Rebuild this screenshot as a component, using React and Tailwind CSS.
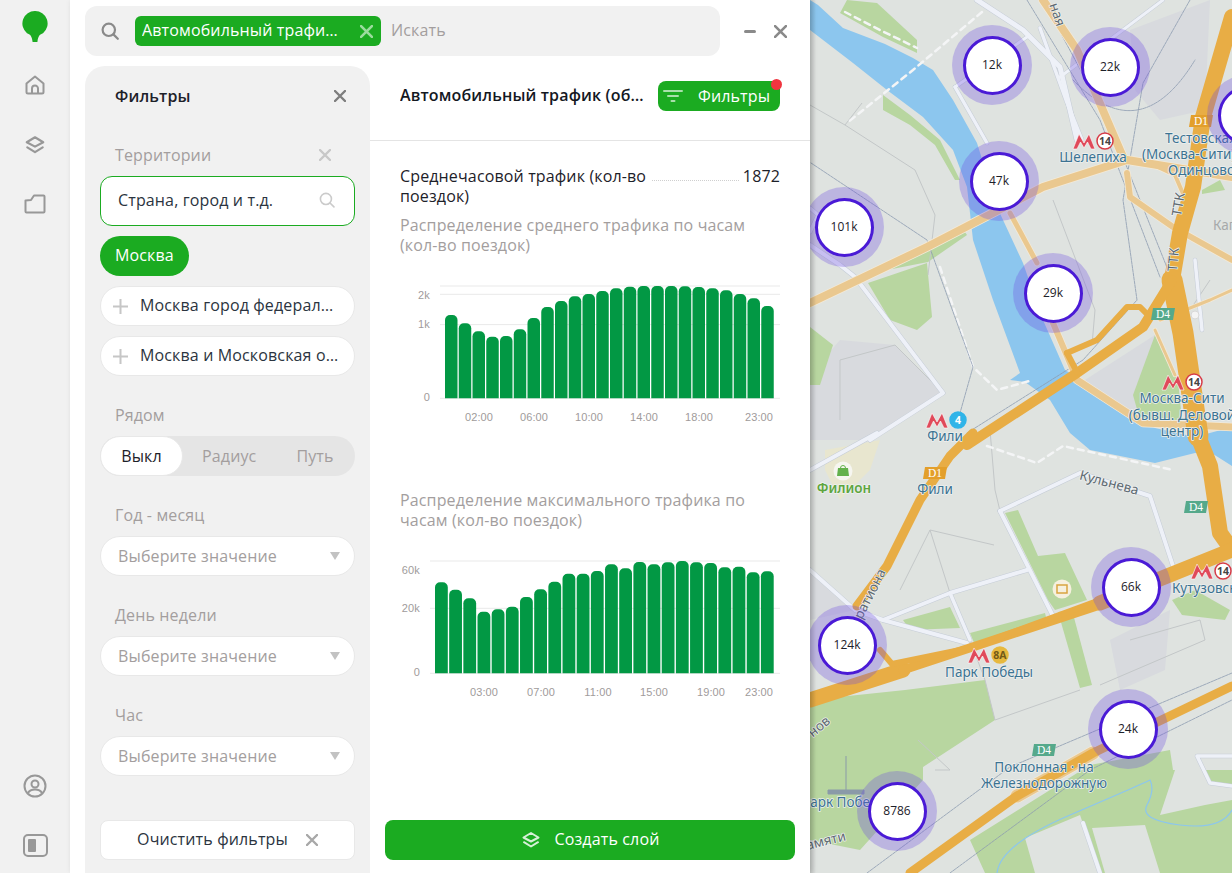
import React from 'react';

const GREEN = '#1bab21';

const avgTops = [135, 160, 184, 200, 198, 178, 144, 111, 93, 79, 72, 63, 55, 50, 48, 48, 48, 49, 51, 55, 61, 72, 85, 108];
const maxTops = [112, 134, 160, 200, 193, 185, 156, 133, 110, 86, 86, 78, 58, 70, 51, 58, 52, 48, 52, 54, 67, 65, 82, 79];

const Cross = ({ size = 12, color = '#8a8a8a', width = 2.4 }) => (
  <svg className="shrink-0" width={size} height={size} viewBox="0 0 12 12" fill="none" stroke={color} strokeWidth={width} strokeLinecap="round">
    <path d="M1 1l10 10M11 1L1 11" />
  </svg>
);

const SearchIcon = ({ size = 18, color = '#8a8a8a', width = 2.2 }) => (
  <svg className="shrink-0" width={size} height={size} viewBox="0 0 18 18" fill="none" stroke={color} strokeWidth={width} strokeLinecap="round">
    <circle cx="7.8" cy="7.8" r="6.2" />
    <path d="M12.4 12.4l4.4 4.4" />
  </svg>
);

const LayersIcon = ({ color, size = 20 }) => (
  <svg width={size} height={size} viewBox="0 0 20 20" fill="none" stroke={color} strokeWidth="2" strokeLinejoin="round" strokeLinecap="round">
    <path d="M10 3l7.5 4.5L10 11.5 2.500 7.500z" />
    <path d="M3 12.200l7 4.300 7-4.300" />
  </svg>
);

const Sidebar = () => (
  <div className="w-[70px] shrink-0 bg-[#f1f1f1] flex flex-col items-center pt-[11px] pb-[16px]">
    <svg width="26" height="32" viewBox="0 0 26 32" fill={GREEN}>
      <path d="M13 0a12.500 12.500 0 0 1 8 22.200c-3 1-4.800 2.300-5.600 8.800h-4.800c-.8-6.500-2.600-7.800-5.600-8.800A12.500 12.500 0 0 1 13 0z" />
    </svg>
    <svg className="mt-[31px]" width="22" height="22" viewBox="0 0 22 22" fill="none" stroke="#989898" strokeWidth="2" strokeLinejoin="round">
      <path d="M2.500 9.500L11 2.500l8.500 7v8.500a1.500 1.500 0 0 1-1.500 1.500H4a1.500 1.500 0 0 1-1.500-1.500z" />
      <path d="M8 19.500v-5a3 3 0 0 1 6 0v5" />
    </svg>
    <div className="mt-[38px]">
      <LayersIcon color="#989898" size={22} />
    </div>
    <svg className="mt-[38px]" width="22" height="20" viewBox="0 0 22 20" fill="none" stroke="#989898" strokeWidth="2" strokeLinejoin="round">
      <path d="M1.500 6.500L7 6l3-4.500h9.500a1 1 0 0 1 1 1v15a1 1 0 0 1-1 1h-17a1 1 0 0 1-1-1z" />
    </svg>
    <div className="flex-1" />
    <svg width="24" height="24" viewBox="0 0 24 24" fill="none" stroke="#989898" strokeWidth="2">
      <circle cx="12" cy="12" r="10.500" />
      <circle cx="12" cy="10" r="3.500" />
      <path d="M5 19c1.500-3 4-3.500 7-3.500s5.500.5 7 3.500" />
    </svg>
    <div className="mt-[36px] w-[25px] h-[23px] rounded-[5px] border-2 border-[#989898] flex p-[3px]">
      <div className="w-[8px] bg-[#989898] rounded-[1px]" />
    </div>
  </div>
);

const Label = ({ children, className = '' }) => (
  <div className={`pl-[15px] h-[20px] leading-[20px] text-[#a39e9e] ${className}`}>{children}</div>
);

const AddRow = ({ children }) => (
  <div className="h-[40px] mt-[10px] pb-[2px] flex items-center rounded-full bg-white border border-[#e8e8e8] pl-[12px] pr-[14px]">
    <svg className="shrink-0 mt-[2px]" width="15" height="15" viewBox="0 0 15 15" stroke="#c6c6c6" strokeWidth="2">
      <path d="M7.500 0v15M0 7.500h15" />
    </svg>
    <span className="ml-[12px] truncate text-[#2b3440]">{children}</span>
  </div>
);

const SelectBox = () => (
  <div className="h-[40px] mt-[11px] flex items-center justify-between rounded-full bg-white border border-[#e8e8e8] pl-[17px] pr-[14px] text-[#a39e9e]">
    <span>Выберите значение</span>
    <svg width="10" height="8" viewBox="0 0 10 8" fill="#c2c2c2">
      <path d="M0 0h10L5 8z" />
    </svg>
  </div>
);

const FiltersPanel = () => (
  <div className="w-[285px] shrink-0 bg-[#f1f1f1] rounded-t-[20px] px-[15px] flex flex-col">
    <div className="h-[60px] flex items-center justify-between pl-[15px] pr-[9px]">
      <span className="font-semibold text-[#1d2129]">Фильтры</span>
      <Cross size={12} color="#7e7e7e" />
    </div>
    <div className="mt-[19px] flex items-center justify-between pr-[24px]">
      <Label>Территории</Label>
      <Cross size={12} color="#c8c8c8" />
    </div>
    <div className="mt-[11px] h-[50px] pb-[2px] flex items-center justify-between rounded-[12px] bg-white border border-[#1bab21] pl-[17px] pr-[19px] text-[#2b3440]">
      <span>Страна, город и т.д.</span>
      <SearchIcon size={16} color="#cbcbcb" width={1.8} />
    </div>
    <div className="mt-[10px] self-start h-[40px] pb-[2px] px-[15px] flex items-center rounded-full bg-[#1bab21] text-white">Москва</div>
    <AddRow>Москва город федерального значения</AddRow>
    <AddRow>Москва и Московская область</AddRow>
    <Label className="mt-[29px]">Рядом</Label>
    <div className="mt-[11px] h-[40px] flex items-center rounded-full bg-[#e5e5e5] text-[#a39e9e]">
      <div className="w-[83px] h-full rounded-full bg-white border border-[#e8e8e8] flex items-center justify-center text-[#1d2129]">Выкл</div>
      <span className="ml-[19px]">Радиус</span>
      <span className="ml-[40px]">Путь</span>
    </div>
    <Label className="mt-[29px]">Год - месяц</Label>
    <SelectBox />
    <Label className="mt-[29px]">День недели</Label>
    <SelectBox />
    <Label className="mt-[29px]">Час</Label>
    <SelectBox />
    <div className="mt-[44px] h-[40px] flex items-center justify-center rounded-[8px] bg-white border border-[#e8e8e8] text-[#2b3440]">
      <span className="mb-[2px]">Очистить фильтры</span>
      <span className="ml-[18px]">
        <Cross size={12} color="#a8a8a8" />
      </span>
    </div>
  </div>
);

const barPath = (x, top, w, base) => {
  const r = 5;
  return `M${x} ${base}V${top + r}a${r} ${r} 0 0 1 ${r} -${r}h${w - 2 * r}a${r} ${r} 0 0 1 ${r} ${r}V${base}z`;
};

const Chart = ({ tops, startX, step, barW, gridX, grid, yLabels, yRight, xLabels }) => (
  <svg className="mt-[15px] block" width="400" height="170" viewBox="0 0 400 170">
    {grid.map((y) => (
      <line key={y} x1={gridX} x2="390" y1={y} y2={y} stroke="#e9e9e9" strokeWidth="1" />
    ))}
    {tops.map((t, i) => (
      <path key={i} d={barPath(startX + i * step, t / 3, barW, 128.3)} fill="#029844" />
    ))}
    <g fill="#a09b9b" fontSize="11" fontFamily='"Liberation Sans", sans-serif'>
      {yLabels.map(([txt, y]) => (
        <text key={txt} x={yRight} y={y} textAnchor="end">{txt}</text>
      ))}
      {xLabels.map(([txt, x]) => (
        <text key={txt} x={x} y="151" textAnchor="middle">{txt}</text>
      ))}
    </g>
  </svg>
);

const ReportPanel = () => (
  <div className="flex-1 flex flex-col min-w-0">
    <div className="h-[75px] border-b border-[#e4e4e4] flex items-start pt-[15px] pl-[30px] pr-[30px]">
      <span className="w-[248px] h-[30px] leading-[28px] truncate font-semibold text-[#14181f]">Автомобильный трафик (общий)</span>
      <div className="relative ml-[10px] w-[122px] h-[30px] rounded-[8px] bg-[#1bab21] flex items-center text-white">
        <svg className="ml-[5px]" width="20" height="14" viewBox="0 0 20 14" stroke="#a9e0ab" strokeWidth="2" strokeLinecap="round">
          <path d="M1 2h18M5 7h10M8.500 12h3" />
        </svg>
        <span className="ml-[15px]">Фильтры</span>
        <span className="absolute -top-[2px] -right-[2px] w-[11px] h-[11px] rounded-full bg-[#f0353f]" />
      </div>
    </div>
    <div className="pt-[25px] pl-[20px]">
      <div className="flex items-start pl-[10px] pr-[30px] leading-[20px] text-[#1d2129]">
        <span className="w-[250px] shrink-0">Среднечасовой трафик (кол-во поездок)</span>
        <span className="mt-[14px] ml-[2px] flex-1 border-b border-dotted border-[#cfcfcf]" />
        <span className="ml-[4px]">1872</span>
      </div>
      <div className="mt-[9px] pl-[10px] w-[370px] leading-[20px] text-[#a39e9e]">Распределение среднего трафика по часам (кол-во поездок)</div>
      <Chart
        tops={avgTops}
        startX={55}
        step={13.75}
        barW={12.500}
        gridX={50}
        grid={[16, 24.300, 54.600, 128.300]}
        yLabels={[['2k', 29], ['1k', 57.500], ['0', 131]]}
        yRight={40}
        xLabels={[['02:00', 89], ['06:00', 144], ['10:00', 199], ['14:00', 254], ['18:00', 309], ['23:00', 369]]}
      />
      <div className="mt-[50px] pl-[10px] w-[370px] leading-[20px] text-[#a39e9e]">Распределение максимального трафика по часам (кол-во поездок)</div>
      <Chart
        tops={maxTops}
        startX={45}
        step={14.170}
        barW={12.800}
        gridX={40}
        grid={[16, 63.300, 128.300]}
        yLabels={[['60k', 29], ['20k', 67], ['0', 131]]}
        yRight={30}
        xLabels={[['03:00', 94], ['07:00', 151], ['11:00', 208], ['15:00', 264], ['19:00', 321], ['23:00', 369]]}
      />
    </div>
    <div className="flex-1" />
    <div className="px-[15px] pb-[13px]">
      <div className="h-[40px] rounded-[8px] bg-[#1bab21] flex items-center justify-center text-white">
        <LayersIcon color="#d6f0d7" />
        <span className="ml-[14px] mb-[2px]">Создать слой</span>
      </div>
    </div>
  </div>
);

const ORANGE = '#e8ad45';
const TAN = '#eac88f';

const whiteRoads = [
  ['0,245 30,265 45,277 133,393 60,440', 4],
  ['167,0 213,30 250,67 267,140', 5],
  ['145,87 177,143', 3.5],
  ['145,87 217,37', 3],
  ['250,77 353,0', 3],
  ['230,28 256,100 272,140', 3.5],
  ['190,511 270,473 340,496 363,566', 4],
  ['190,511 243,616', 4],
  ['73,620 140,593 217,570', 4],
  ['0,570 45,610 73,620 157,643', 4],
  ['140,593 160,640', 3.5],
  ['0,470 67,433', 4],
  ['273,823 290,873', 4],
  ['422,756 387,756 400,783 422,786', 3.5],
  ['0,208 8,215 0,232', 3.5],
  ['385,260 392,330', 3.5],
];

const tanRoads = [
  ['0,303 117,247 233,187 317,160 422,177', 8],
  ['233,0 267,50 313,157', 8],
  ['200,213 227,263', 5],
  ['243,323 263,370', 6],
  ['317,173 320,197 363,227 422,260', 6],
  ['267,380 333,423 422,427', 7],
  ['333,160 365,175 380,210', 4],
  ['345,330 365,375', 3],
  ['350,320 400,300 422,290', 3],
  ['207,796 283,753', 13],
];

const orangeRoads = [
  ['422,17 393,117 383,187 370,233 362,280 373,333 388,436 400,466 410,533 422,550', 16],
  ['362,280 373,333 388,436', 21],
  ['157,445 267,373 333,327 362,280', 10],
  ['163,433 140,456 110,500 77,566 47,606', 9],
  ['0,700 93,670', 15],
  ['93,670 290,605', 9],
  ['70,650 82,664 160,648 290,600', 6],
  ['290,603 422,550', 15],
  ['100,873 207,796 283,753 422,686', 9],
  ['257,353 287,340 317,307 330,307 340,317', 6],
  ['257,353 267,372', 6],
];

const Metro = ({ x, y, label, ring = '#d63b47', fill = '#ffffff', color = '#444' }) => (
  <g>
    <path d={`M${x - 11} ${y + 7}l6 -15 5 9 5 -9 6 15h-4l-3.500 -7 -3.500 6 -3.500 -6 -3.500 7z`} fill="#e04a5a" stroke="#ffffff" strokeWidth=".6" />
    <circle cx={x + 21} cy={y - 1} r="8" fill={fill} stroke={ring} strokeWidth="1.500" />
    <text x={x + 21} y={y + 3} textAnchor="middle" fontSize="10.500" fontWeight="700" fill={color}>{label}</text>
  </g>
);

const RoadBadge = ({ x, y, label, fill }) => (
  <g>
    <path d={`M${x - 12} ${y + 6}l2 -12h22l-2 12z`} fill={fill} />
    <text x={x} y={y + 4} textAnchor="middle" fontSize="11.500" fontFamily='"Liberation Serif", serif' fill="#ffffff">{label}</text>
  </g>
);

const mapLabels = [
  ['Шелепиха', 283, 162, 'middle'],
  ['Тестовская', 355, 143, 'start'],
  ['(Москва-Сити)', 332, 159, 'start'],
  ['Одинцово', 358, 175, 'start'],
  ['Москва-Сити', 372, 403, 'middle'],
  ['(бывш. Деловой', 372, 420, 'middle'],
  ['центр)', 372, 436, 'middle'],
  ['Фили', 135, 441, 'middle'],
  ['Фили', 125, 494, 'middle'],
  ['Кутузовск', 362, 593, 'start'],
  ['Парк Победы', 179, 677, 'middle'],
  ['Поклонная · на', 234, 772, 'middle'],
  ['Железнодорожную', 234, 788, 'middle'],
  ['Парк Побе', 60, 807, 'end'],
];

const rotatedLabels = [
  ['Кульнева', 298, 487, 15],
  ['памяти', 13, 846, -14],
  ['ратиона', 64, 596, -63],
  ['нов', 12, 730, -40],
  ['ная', 243, 16, 72],
  ['ТТК', 373, 205, -80],
  ['ТТК', 368, 260, -85],
];

const clusters = [
  ['12k', 182, 65],
  ['22k', 300, 67],
  ['', 437, 115],
  ['47k', 189, 181],
  ['101k', 34, 227],
  ['29k', 243, 293],
  ['66k', 321, 587],
  ['124k', 37, 645],
  ['24k', 318, 729],
  ['8786', 87, 811],
];

const MapView = () => (
  <div className="relative w-[422px] h-full overflow-hidden bg-[#dfe3e0] tracking-normal">
    <svg className="absolute inset-0" width="422" height="873" viewBox="0 0 422 873" fontFamily='"Noto Sans", sans-serif'>
      <g fill="#d8dade">
        <path d="M30 340L85 345 133 393 60 440 0 440 0 375z" />
        <path d="M320 30L400 0 395 110 350 120 325 90z" />
        <path d="M275 380L345 335 365 400 330 420z" />
        <path d="M300 640L360 610 355 670 310 690z" />
        <path d="M0 570L45 610 0 620z" />
      </g>
      <path d="M15 450L70 440 60 470 30 500 15 470z" fill="#e8e6cf" />
      <path d="M0 0L8 5 33 28 75 44 103 58 123 70 143 100 167 143 187 207 213 263 233 320 255 370 275 382 305 405 345 428 385 437 422 427V466L400 452 385 453 345 463 280 450 260 433 240 400 215 382 200 380 210 373 183 300 163 240 160 213 157 187 143 150 113 117 77 90 43 63 0 30z" fill="#8cc6ee" />
      <g fill="#b8d6a0">
        <path d="M37 0L67 3 107 40 107 53 73 37 30 13z" />
        <path d="M73 95L100 115 130 140 150 180 145 180 125 145 100 125 73 110z" />
        <path d="M58 283L117 263 122 317 107 330 80 320z" />
        <path d="M77 270L150 225 157 235 118 262z" />
        <path d="M0 327L23 345 10 385 0 385z" />
        <path d="M323 395L345 335 368 380 372 420 330 420z" />
        <path d="M392 190L410 180 415 190 392 194z" />
        <path d="M0 700L95 690 175 680 185 720 113 767 113 780 50 850 0 840z" />
        <path d="M160 840L280 765 360 750 363 770 422 770V873H175z" />
        <path d="M195 513L208 510 228 556 255 553 277 600 245 610 238 600z" />
        <path d="M248 612L262 610 282 685 270 688z" />
        <path d="M93 620L140 607 150 628 100 630z" />
        <path d="M160 633L235 613 238 625 165 645z" />
        <path d="M362 600L385 590 420 610 415 620 372 615z" />
      </g>
      <g fill="#dfe3e0">
        <path d="M215 838L270 815 290 873H225z" />
        <path d="M282 828L335 825 350 873H295z" />
        <path d="M365 770L385 756 400 783 422 786V800L395 805 350 815z" />
      </g>
      <g fill="none" stroke="#c3c7c8" strokeWidth="1">
        <path d="M0 105L35 125 105 170 125 215 118 275" />
        <path d="M35 125L52 103" />
        <path d="M30 420L30 360 85 345 133 393" />
        <path d="M243 200L285 310 282 345" />
        <path d="M120 530L140 593M90 590L120 530 184 545" />
        <path d="M185 720L175 680 160 640M185 720L270 690" />
        <path d="M125 770L140 770 108 740M320 640L390 620 395 640 290 685" />
        <path d="M380 310L400 280M180 430L185 490 190 511" />
      </g>
      <g fill="none" strokeLinecap="round" strokeLinejoin="round">
        {whiteRoads.map(([pts, w]) => (
          <polyline key={pts} points={pts} stroke="#c5ccd6" strokeWidth={w + 1} />
        ))}
        {whiteRoads.map(([pts, w]) => (
          <polyline key={pts} points={pts} stroke="#eef1f8" strokeWidth={w} />
        ))}
        <path d="M172 12L103 70 37 123M130 267L163 367 187 390 223 380M177 446L227 463 253 446 363 470M35 12L70 30 107 48" stroke="#f4f5f6" strokeWidth="2.500" strokeDasharray="6 5" />
        <path d="M217 0L290 120 350 277M233 0L300 125 370 300M1 163L117 240 163 367 150 413M380 0L333 83 313 200 327 300 273 360 157 433M263 80Q330 150 385 60M57 873L200 767 422 673M140 873L280 770 422 700" stroke="#8c9bb0" strokeWidth=".8" strokeDasharray="3 1" />
        {tanRoads.map(([pts, w]) => (
          <polyline key={pts} points={pts} stroke="#f3ead8" strokeWidth={w + 1.500} />
        ))}
        {tanRoads.map(([pts, w]) => (
          <polyline key={pts + 't'} points={pts} stroke={TAN} strokeWidth={w} />
        ))}
        {orangeRoads.map(([pts, w]) => (
          <polyline key={pts} points={pts} stroke={ORANGE} strokeWidth={w} />
        ))}
        <path d="M187 873Q190 845 260 815T340 780Q345 790 337 805T370 825 422 810" stroke="#8cc6ee" strokeWidth="1.200" />
      </g>
      <circle cx="385" cy="315" r="4" fill="#f4f4f4" stroke="#d8d8d8" />
      <Metro x={274} y={142} label="14" />
      <Metro x={363} y={383} label="14" />
      <Metro x={392} y={572} label="14" />
      <Metro x={127} y={421} label="4" fill="#30b4e8" ring="#30b4e8" color="#ffffff" />
      <Metro x={169} y={656} label="8А" fill="#e7b93e" ring="#e7b93e" color="#735a18" />
      <RoadBadge x={391} y={121} label="D1" fill="#e39f2b" />
      <RoadBadge x={353} y={314} label="D4" fill="#55a98b" />
      <RoadBadge x={125} y={473} label="D1" fill="#e39f2b" />
      <RoadBadge x={386} y={507} label="D4" fill="#55a98b" />
      <RoadBadge x={234} y={750} label="D4" fill="#55a98b" />
      <circle cx="33" cy="471" r="9.500" fill="#f6f6f0" />
      <path d="M28 468h10l1 8H27z" fill="#63b14c" />
      <path d="M30.500 468a2.500 2.500 0 0 1 5 0" fill="none" stroke="#63b14c" />
      <circle cx="252" cy="589" r="9.500" fill="#f6f0de" />
      <rect x="247" y="585" width="10" height="8" fill="none" stroke="#d9a440" strokeWidth="1.500" />
      <path d="M36 756v34M18 790h36v4H18z" fill="#8a9aa8" stroke="#8a9aa8" />
      <g stroke="#eef1f0" strokeWidth="1.500" paintOrder="stroke" strokeLinejoin="round" fontSize="13.500" fill="#3c7392">
        {mapLabels.map(([txt, x, y, anchor]) => (
          <text key={txt + x} x={x} y={y} textAnchor={anchor}>{txt}</text>
        ))}
        <text x="34" y="493" textAnchor="middle" fontWeight="600" fill="#5ea53f">Филион</text>
        <text x="403" y="230" fill="#a6a9aa" stroke="none">Кап</text>
        {rotatedLabels.map(([txt, x, y, rot]) => (
          <text key={txt + x} x={x} y={y} textAnchor="middle" fill="#5e6a72" transform={`rotate(${rot} ${x} ${y})`}>{txt}</text>
        ))}
      </g>
    </svg>
    <div className="absolute inset-y-0 left-0 w-[6px] bg-gradient-to-r from-[#00000022] to-transparent" />
    {clusters.map(([txt, x, y]) => (
      <div
        key={x}
        className="absolute w-[80px] h-[80px] -ml-[40px] -mt-[40px] rounded-full bg-[#6e4de1]/30 flex items-center justify-center"
        style={{ left: x, top: y }}
      >
        <div className="w-[59px] h-[59px] rounded-full bg-white border-[3px] border-[#4a1ad6] flex items-center justify-center text-[12px] text-[#1d2129]">
          {txt}
        </div>
      </div>
    ))}
  </div>
);

export default function App() {
  return (
    <div className="w-[1232px] h-[873px] flex overflow-hidden bg-white text-[16px] tracking-[0.14px] font-['Open_Sans',sans-serif]">
      <Sidebar />
      <div className="w-[740px] shrink-0 flex flex-col min-h-0 shadow-[2px_0_6px_rgba(0,0,0,0.15)] z-10">
        <div className="pt-[6px] pl-[15px] flex items-start h-[66px] shrink-0">
          <div className="w-[635px] h-[50px] rounded-[12px] bg-[#f1f1f1] flex items-center pl-[16px]">
            <SearchIcon />
            <div className="ml-[16px] w-[246px] h-[30px] rounded-[6px] bg-[#1bab21] flex items-center pl-[7px] pr-[8px] text-white">
              <span className="flex-1 truncate mb-[2px]">Автомобильный трафик (общий)</span>
              <span className="ml-[18px]"><Cross size={13} color="#9bdc9e" /></span>
            </div>
            <span className="ml-[10px] mb-[2px] text-[#a39e9e]">Искать</span>
          </div>
          <div className="ml-[24px] mt-[24px] w-[12px] h-[2.500px] rounded bg-[#8a8a8a]" />
          <div className="ml-[18px] mt-[19px]"><Cross size={13} color="#8a8a8a" /></div>
        </div>
        <div className="flex flex-1 min-h-0 pl-[15px]">
          <FiltersPanel />
          <ReportPanel />
        </div>
      </div>
      <MapView />
    </div>
  );
}
